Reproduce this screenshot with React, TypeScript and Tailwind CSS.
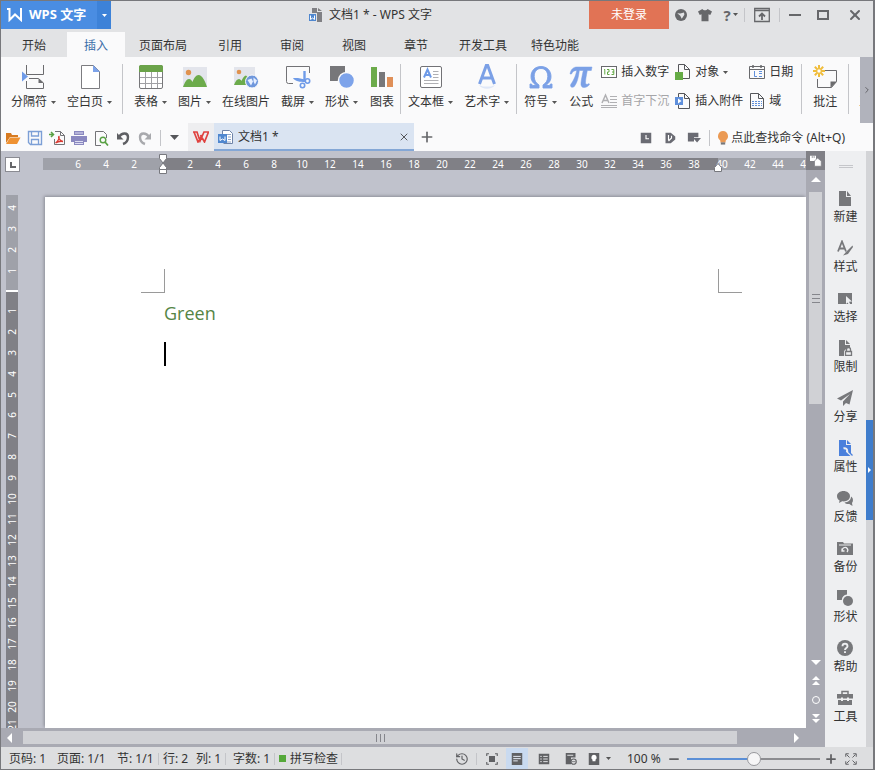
import React from "react";
import clsx from "clsx";
import { ChevronRight, History, Plus, Minus, X } from "lucide-react";

type IconProps = { className?: string };

const TABS = ["开始", "插入", "页面布局", "引用", "审阅", "视图", "章节", "开发工具", "特色功能"];

const H_TICKS = [
  "6", "4", "2", "", "2", "4", "6", "8", "10", "12", "14", "16", "18", "20", "22",
  "24", "26", "28", "30", "32", "34", "36", "38", "40", "42", "44", "46"
];
const V_TOP = ["4", "3", "2", "1"];
const V_BODY = Array.from({ length: 20 }, (_, i) => String(i + 1));

/* ---------- shared bits ---------- */

function Caret({ className = "text-[#555]" }: IconProps) {
  return (
    <svg viewBox="0 0 5 3" className={clsx("w-[5px] h-[3px] shrink-0", className)} fill="currentColor">
      <path d="M0 0h5L2.5 3z" />
    </svg>
  );
}

function Triangle({ dir }: { dir: "up" | "down" | "left" | "right" }) {
  const paths = {
    up: "M1 8l5-5 5 5z",
    down: "M1 4l5 5 5-5z",
    left: "M9 1v10L4 6z",
    right: "M3 1v10l5-5z"
  };
  return (
    <svg viewBox="0 0 12 12" className="w-3 h-3" fill="#fff">
      <path d={paths[dir]} />
    </svg>
  );
}

function Separator({ className = "h-4" }: IconProps) {
  return <div className={clsx("w-px bg-[#c4c5c9] shrink-0", className)} />;
}

/* ---------- ribbon icons, 26px box ---------- */

function Glyph({ children }: { children: React.ReactNode }) {
  return (
    <svg viewBox="0 0 26 26" className="w-[26px] h-[26px]" fill="none">
      {children}
    </svg>
  );
}

const BreakIcon = () => (
  <Glyph>
    <path d="M5.500 1v9.500h17V1M5.500 17v7.500h17v-5.500l-5-4.500H8" stroke="#6b6b6e" />
    <path d="M17.500 14.500v4.500h5z" fill="#6b6b6e" />
    <path d="M1 7.500l6 5-6 5z" fill="#6f9be8" />
  </Glyph>
);

const BlankPageIcon = () => (
  <Glyph>
    <path d="M4.500 1.500h12l6 6v17h-18z" stroke="#7c7c80" fill="#fff" />
    <path d="M16 1v7h7z" fill="#7da3ea" />
  </Glyph>
);

const TableIcon = () => (
  <Glyph>
    <rect x="1.500" y="1.500" width="23" height="23" rx="1.500" fill="#fff" stroke="#77777a" />
    <path d="M1 3a2 2 0 0 1 2-2h20a2 2 0 0 1 2 2v5H1z" fill="#6ba34a" />
    <path d="M2 13.500h22M2 19.500h22M7.500 8v16M13.500 8v16M19.500 8v16" stroke="#a0a0a4" />
  </Glyph>
);

const PictureIcon = () => (
  <Glyph>
    <rect x="1" y="3" width="24" height="20" fill="#e3e5ec" />
    <circle cx="6.500" cy="8.500" r="2.700" fill="#e0924f" />
    <path d="M1 23c2-5 3.500-8 6-8 1.800 0 2.800 1.500 3.500 3 1.500-4 3.500-7 6-7 4 0 7 7 8.500 12z" fill="#6cab4b" />
  </Glyph>
);

const OnlinePictureIcon = () => (
  <Glyph>
    <rect x="1" y="3" width="21" height="18" fill="#e3e5ec" />
    <circle cx="6" cy="8" r="2.300" fill="#e0924f" />
    <path d="M1 21c1.500-4 3-6 5-6 1.200 0 2 1 2.500 2 1-3 3-5.500 4.500-5.500l3 3-2 6.500z" fill="#6cab4b" />
    <circle cx="19" cy="17.500" r="6.500" fill="#6f97dc" stroke="#fafafb" />
    <path d="M14.500 16l4-1.500 1.500 3-2 4zM20.500 13.500l3.500 3-2 4-1.500-3z" fill="#e8f0ff" />
  </Glyph>
);

const ScreenshotIcon = () => (
  <Glyph>
    <path d="M8 19.500H3.500a2 2 0 0 1-2-2V2.500h23V9" stroke="#727276" />
    <path d="M19.500 7v10" stroke="#6f9be8" strokeWidth="2.400" />
    <path d="M8 14h5l7 1.500V18c-5 0-10-.5-12-4z" fill="#6f9be8" />
    <circle cx="22.500" cy="17" r="2.200" stroke="#6f9be8" strokeWidth="1.600" />
    <circle cx="17.500" cy="21.500" r="2.200" stroke="#6f9be8" strokeWidth="1.600" />
  </Glyph>
);

const ShapesIcon = () => (
  <Glyph>
    <path d="M1 2h15v15H1z" fill="#77777a" />
    <circle cx="17.500" cy="16.500" r="8" fill="#7da3ea" stroke="#fafafb" strokeWidth="1.500" />
  </Glyph>
);

const ChartIcon = () => (
  <Glyph>
    <path d="M2 3h6v20H2z" fill="#6cab4b" />
    <path d="M10 8h6v15h-6z" fill="#77777a" />
    <path d="M18 13h6v10h-6z" fill="#df8f58" />
  </Glyph>
);

const TextBoxIcon = () => (
  <Glyph>
    <rect x="2.500" y="2.500" width="21" height="21" rx="1.500" stroke="#727276" fill="#fff" />
    <path d="M6 13.500l3.500-8 3.500 8M7.500 11h4" stroke="#6f9be8" strokeWidth="2" />
    <path d="M15 7.500h5.500M15 10.500h5.500M15 13.500h5.500M6 16.500h14.500M6 19.500h14.500" stroke="#b0b0b4" />
  </Glyph>
);

const WordArtIcon = () => (
  <Glyph>
    <path d="M5.500 20L12.300 1.500h1.400L20.500 20M8 14h10" stroke="#7ba0e6" strokeWidth="3" />
    <path d="M5 21c3 5 13 5 16 0l-4 1.500H9z" fill="#dfe7f7" />
  </Glyph>
);

const OmegaIcon = () => (
  <Glyph>
    <path
      d="M2 24v-4h1.500l1 1.500h4C4.500 19 3 16 3 12.500 3 6.500 7.200 2.500 13 2.500s10 4 10 10c0 3.500-1.500 6.500-5.500 9h4l1-1.500H24v4h-9v-3c3.300-2 4.800-5 4.800-8.500 0-5-2.600-8-6.800-8s-6.800 3-6.800 8c0 3.500 1.500 6.500 4.800 8.500v3z"
      fill="#7ba0e6"
      stroke="#7ba0e6"
      strokeWidth=".9"
    />
  </Glyph>
);

const PiIcon = () => (
  <Glyph>
    <path
      d="M2 10c1-5 3.500-7 7-7h15l-.7 3.500h-4c-1 5-1.800 9.500-1.800 12 0 2 1.700 2.500 3.500 1l.5 1c-1.500 2-3.500 3-5.500 3-2.500 0-3.300-2-3-4.500.3-3.500 1.300-8 2.300-12.500h-4c-.7 6-2 12.500-5 16-1.300 1.300-3.800 1-3.800-1 0-2 4-4.500 6.300-15-2.300 0-4 .5-5.300 3.500z"
      fill="#7ba0e6"
      stroke="#7ba0e6"
      strokeWidth=".5"
    />
  </Glyph>
);

const CommentIcon = () => (
  <Glyph>
    <path d="M13 6.500h11.500v11l-5 6H5.500V15" stroke="#6b6b6e" />
    <path d="M18.500 24v-6.500H25z" fill="#6b6b6e" />
    <path d="M7 1v12M1 7h12M2.800 2.800l8.400 8.400M11.200 2.800l-8.400 8.400" stroke="#f0bd3c" strokeWidth="2" />
    <circle cx="7" cy="7" r="2.200" fill="#fff" stroke="#f0bd3c" />
  </Glyph>
);

const ToolIcon = () => (
  <Glyph>
    <path d="M4.500 3.500h17v18h-17z" stroke="#fafafb" />
  </Glyph>
);

/* ---------- small ribbon icons, 16px box ---------- */

function Small({ children, className = "w-4 h-4" }: { children: React.ReactNode; className?: string }) {
  return (
    <svg viewBox="0 0 16 16" className={clsx("shrink-0", className)} fill="none">
      {children}
    </svg>
  );
}

const NumberIcon = () => (
  <Small>
    <rect x=".5" y="2.500" width="15" height="11" stroke="#68696c" fill="#fff" />
    <path d="M3 5.500h.8v5M6 5.500h2v2.500H6.500v2.500h2M10.500 5.500h2.300v5h-2.300M11 8h2" stroke="#62a844" />
  </Small>
);

const DropCapIcon = () => (
  <Small>
    <path d="M1 10L4.500 2 8 10M2 7.500h5" stroke="#b0b0b3" strokeWidth="1.500" />
    <path d="M9 3.500h7M9 6.500h7M9 9.500h7M0 12.500h16M0 14.500h16" stroke="#b0b0b3" />
  </Small>
);

const ObjectIcon = () => (
  <Small>
    <path d="M3.500 8V.5h6l5 5v9H8" stroke="#55565a" />
    <path d="M9.500.5v5h5" stroke="#55565a" />
    <path d="M0 8h8v8H0z" fill="#65ab45" />
  </Small>
);

const AttachIcon = () => (
  <Small>
    <path d="M3.500 4V.5h6l5 5v10h-11V12" stroke="#55565a" />
    <path d="M9.500.5v5h5" stroke="#55565a" />
    <rect x="0" y="4" width="8" height="8" fill="#5f8fdb" />
    <path d="M3 5.500l3.500 2.500L3 10.500z" fill="#fff" />
  </Small>
);

const DateIcon = () => (
  <Small>
    <path d="M.5 2.500h15v12H.5zM.5 5.500h15" stroke="#68696c" />
    <path d="M4 1v3M12 1v3" stroke="#68696c" strokeWidth="1.500" />
    <path d="M5.500 7v5.500H8M10 7.500h3M10 9.500h3M10 12.500h3" stroke="#5f8fdb" />
  </Small>
);

const FieldIcon = () => (
  <Small>
    <path d="M1.500.5h8l5 5v10h-13zM9.500.5v5h5" stroke="#55565a" />
    <path d="M3 8.500h10M3 10.500h10M3 12.500h10" stroke="#5f8fdb" strokeDasharray="2 1" />
  </Small>
);

/* ---------- quick access icons ---------- */

const QUICK_ICONS: { label: string; icon: React.ReactNode }[] = [
  {
    label: "打开",
    icon: (
      <Small>
        <path d="M1 13V3h5l1 2h6v2H5z" fill="#d77a20" />
        <path d="M1 14l4-6.500h10.500L12 14z" fill="#ef9232" />
      </Small>
    )
  },
  {
    label: "保存",
    icon: (
      <Small>
        <path d="M1.500 1.500h13v13h-11l-2-2z" stroke="#7c9fd6" strokeWidth="1.400" />
        <path d="M4.500 2v4h7V2M4.500 14V9.500h7V14" stroke="#7c9fd6" strokeWidth="1.300" />
      </Small>
    )
  },
  {
    label: "输出为PDF",
    icon: (
      <Small>
        <path d="M6 1.500h5.500l4 4v9h-10V9M11.500 1.500v4h4" stroke="#737377" />
        <path d="M6.500 13c3-2 4-5 3.500-6.500-1 0 0 4.500 4 5-2-.5-5 0-7.500 1.500z" stroke="#d93a32" strokeWidth="1.300" />
        <path d="M0 4.500h4M2 2l2.500 2.500L2 7" stroke="#58a043" strokeWidth="1.500" />
      </Small>
    )
  },
  {
    label: "打印",
    icon: (
      <Small>
        <path d="M3 1h10v4H3zM0 6h16v6H0zM3 10h10v5H3z" fill="#8a88c0" />
        <path d="M4 3h8M4 11.500h8M4 13.500h8" stroke="#dcdcf0" />
      </Small>
    )
  },
  {
    label: "打印预览",
    icon: (
      <Small>
        <path d="M8 15.500H2.500V1.500h8l3 3V8" stroke="#737377" />
        <circle cx="10" cy="10" r="2.800" stroke="#58a043" strokeWidth="1.400" />
        <path d="M12 12l3 3.500" stroke="#58a043" strokeWidth="1.700" />
      </Small>
    )
  },
  {
    label: "撤销",
    icon: (
      <Small>
        <path d="M4 7c3-5 9-4.500 9 0 0 3.500-2 6-5 7" stroke="#5e5f63" strokeWidth="2.400" />
        <path d="M2 3v6.500h6.500z" fill="#5e5f63" />
      </Small>
    )
  },
  {
    label: "恢复",
    icon: (
      <Small>
        <path d="M12 7C9 2 3 2.500 3 7c0 3.500 2 6 5 7" stroke="#a8a9ad" strokeWidth="2.400" />
        <path d="M14 3v6.500H7.500z" fill="#a8a9ad" />
      </Small>
    )
  }
];

/* ---------- sidebar ---------- */

const SIDE_ITEMS: { label: string; active?: boolean; icon: React.ReactNode }[] = [
  { label: "新建", icon: <path d="M2 1h7v6h5v9H2zM10 1l4 5h-4z" fill="currentColor" /> },
  {
    label: "样式",
    icon: (
      <>
        <path d="M1 11.500L5 1.500l4 10M2.500 8.500h5" stroke="currentColor" strokeWidth="1.800" />
        <path d="M15.500 5.500L9 12l-3 3.500 5-1.500 5-7z" fill="currentColor" />
      </>
    )
  },
  {
    label: "选择",
    icon: (
      <>
        <path d="M1 3h14v11H1z" fill="currentColor" />
        <path d="M9 6l6 5.500-3 .3 1.500 3-1.500.7-1.300-3L9 14z" fill="#eeeff1" />
      </>
    )
  },
  {
    label: "限制",
    icon: (
      <>
        <path d="M2 0h6v5h5v3h-3l-3 3v5H2zM9 0l4 4H9z" fill="currentColor" />
        <path d="M8.500 11.500h6v4h-6zM9.500 11V9.500a2 2 0 0 1 4 0V11" stroke="currentColor" strokeWidth="1.300" />
      </>
    )
  },
  { label: "分享", icon: <path d="M16 0L0 8.500l4 2L13 4 6 11.500V16l3-3 3.500 1.500z" fill="currentColor" /> },
  {
    label: "属性",
    active: true,
    icon: (
      <>
        <path d="M2 0h7v5h5v11H2zM10 0l4 4h-4z" fill="currentColor" />
        <path d="M6.500 8.500a2.500 2.500 0 0 1 3.500 3l5 4.500" stroke="#eeeff1" strokeWidth="2" />
        <path d="M11.500 11.500l4 4" stroke="currentColor" strokeWidth="1.300" />
      </>
    )
  },
  {
    label: "反馈",
    icon: (
      <>
        <path d="M6.500 1C3 1 0 3.200 0 6.200c0 1.800 1 3.300 2.600 4.200L2 13l3.200-1.700C9.500 12 13 9.500 13 6.200 13 3.200 10 1 6.500 1z" fill="currentColor" />
        <path d="M14 6.500c0 3.500-3 5.800-6.500 6 1 1.300 3 1.800 4.800 1.500L15.500 16l-.5-3c1.500-2 1.300-5-1-6.500z" fill="currentColor" />
      </>
    )
  },
  {
    label: "备份",
    icon: (
      <>
        <path d="M0 2h6l1 1.500h9V15H0z" fill="currentColor" />
        <path d="M2 5h12" stroke="#eeeff1" />
        <path d="M5.500 11a2.700 2.700 0 1 1 4.500 1M5 8.500V11h2.500" stroke="#eeeff1" strokeWidth="1.300" />
      </>
    )
  },
  {
    label: "形状",
    icon: (
      <>
        <path d="M0 0h10v4.500A6 6 0 0 0 4.800 10H0z" fill="currentColor" />
        <circle cx="11" cy="11" r="5" fill="currentColor" />
      </>
    )
  },
  {
    label: "帮助",
    icon: (
      <>
        <circle cx="8" cy="8" r="8" fill="currentColor" />
        <path d="M5.500 6.200c0-3.200 5-3.200 5 0 0 1.800-2.500 1.800-2.500 3.800M8 11.200v1.800" stroke="#eeeff1" strokeWidth="1.900" />
      </>
    )
  },
  {
    label: "工具",
    icon: (
      <>
        <path d="M5 4V1.500h6V4" stroke="currentColor" strokeWidth="1.500" />
        <path d="M0 4h16v4.500h-4V7.500h-2v1H6v-1H4v1H0zM1 10h3v1h2v-1h4v1h2v-1h3v5H1z" fill="currentColor" />
      </>
    )
  }
];

/* ---------- ribbon ---------- */

interface BigButtonProps {
  icon: React.ReactNode;
  label: string;
  menu?: boolean;
}

function BigButton({ icon, label, menu }: BigButtonProps) {
  return (
    <button className="flex flex-col items-center gap-1 px-[5px] shrink-0 hover:bg-[#e6ecf6]">
      {icon}
      <span className="flex items-center gap-1 leading-4 whitespace-nowrap">
        {label}
        {menu && <Caret />}
      </span>
    </button>
  );
}

function SmallButton({ icon, label, menu, disabled }: BigButtonProps & { disabled?: boolean }) {
  return (
    <button
      disabled={disabled}
      className="flex items-center gap-1 h-4 leading-4 whitespace-nowrap disabled:text-[#a5a5a8]"
    >
      {icon}
      {label}
      {menu && <Caret />}
    </button>
  );
}

function Ribbon() {
  return (
    <div className="flex h-[66px] bg-[#fafafb] shrink-0">
      <div className="flex flex-1 min-w-0 overflow-hidden items-start pt-[7px]">
        <div className="flex gap-px px-[5px]">
          <BigButton icon={<BreakIcon />} label="分隔符" menu />
          <BigButton icon={<BlankPageIcon />} label="空白页" menu />
        </div>
        <Separator className="h-[50px]" />
        <div className="flex gap-px pl-1.5">
          <BigButton icon={<TableIcon />} label="表格" menu />
          <BigButton icon={<PictureIcon />} label="图片" menu />
          <BigButton icon={<OnlinePictureIcon />} label="在线图片" />
          <BigButton icon={<ScreenshotIcon />} label="截屏" menu />
          <BigButton icon={<ShapesIcon />} label="形状" menu />
          <BigButton icon={<ChartIcon />} label="图表" />
        </div>
        <Separator className="h-[50px]" />
        <div className="flex gap-px px-0.5">
          <BigButton icon={<TextBoxIcon />} label="文本框" menu />
          <BigButton icon={<WordArtIcon />} label="艺术字" menu />
        </div>
        <Separator className="h-[50px]" />
        <div className="flex gap-px px-0.5">
          <BigButton icon={<OmegaIcon />} label="符号" menu />
          <BigButton icon={<PiIcon />} label="公式" />
        </div>
        <div className="grid grid-cols-[auto_auto_auto] gap-x-1.5 gap-y-[13px] justify-items-start pr-2 shrink-0">
          <SmallButton icon={<NumberIcon />} label="插入数字" />
          <SmallButton icon={<ObjectIcon />} label="对象" menu />
          <SmallButton icon={<DateIcon />} label="日期" />
          <SmallButton icon={<DropCapIcon />} label="首字下沉" disabled />
          <SmallButton icon={<AttachIcon />} label="插入附件" />
          <SmallButton icon={<FieldIcon />} label="域" />
        </div>
        <Separator className="h-[50px]" />
        <div className="px-[5px]">
          <BigButton icon={<CommentIcon />} label="批注" />
        </div>
        <Separator className="h-[50px]" />
        <div className="pl-1">
          <BigButton icon={<ToolIcon />} label="工具" />
        </div>
      </div>
      <button aria-label="更多" className="w-[13px] bg-[#b1b3bc] flex items-center justify-center text-[#55565a]">
        <ChevronRight className="w-2.5 h-2.5" />
      </button>
    </div>
  );
}

function TitleBar() {
  return (
    <header className="flex h-[28px] shrink-0">
      <button className="w-[110px] bg-[#4a8de2] text-white flex items-center pl-1.5">
        <svg viewBox="0 0 16 14" className="w-4 h-3.5" fill="none" stroke="#fff" strokeWidth="2">
          <path d="M0 1h2.500v11L8 6.500l6 5.500V0" />
        </svg>
        <span className="pl-1.5 text-[13px] font-bold flex-1 text-left whitespace-nowrap">WPS 文字</span>
        <span className="h-full w-[14px] flex items-center justify-center bg-[#3d82d8]">
          <Caret className="text-white" />
        </span>
      </button>
      <div className="flex-1 flex items-center justify-center gap-[7px] pl-10">
        <svg viewBox="0 0 14 14" className="w-3.5 h-3.5" fill="none">
          <path d="M4 0h5v4h5v10H4zM10 0l4 3h-4z" fill="#808084" />
          <rect x=".5" y="5.500" width="8" height="8" fill="#4f87cf" stroke="#e2e3e5" />
          <path d="M2.500 7.500v4l2-1.500 2 1.500v-4" stroke="#fff" />
        </svg>
        <h1 className="whitespace-nowrap">文档1 * - WPS 文字</h1>
      </div>
      <button className="w-20 bg-[#e17355] text-white">未登录</button>
      <div className="flex items-center text-[#66676a]">
        <button aria-label="服务" className="w-6 flex justify-center">
          <Small className="w-3 h-3">
            <circle cx="8" cy="8" r="8" fill="currentColor" />
            <path d="M3 5.500l4 .5 5-1.500.5 3L9 13 7 9z" fill="#e2e3e5" />
          </Small>
        </button>
        <button aria-label="皮肤" className="w-6 flex justify-center">
          <Small className="w-3.5 h-3.5">
            <path d="M5 1c1 2 5 2 6 0l5 3-2 4-2-1v8H4V7L2 8 0 4z" fill="currentColor" />
          </Small>
        </button>
        <button aria-label="帮助" className="w-[27px] flex items-center justify-center gap-0.5 text-[15px] font-bold">
          ?<Caret />
        </button>
        <Separator className="h-3.5" />
        <button aria-label="功能区" className="w-[34px] flex justify-center">
          <Small>
            <path d="M.7 1.500h14.600v13H.7zM1 3.500h14" stroke="currentColor" strokeWidth="1.300" />
            <path d="M8 13V7M5 9.500L8 6.500l3 3" stroke="currentColor" strokeWidth="1.800" />
          </Small>
        </button>
        <Separator className="h-3.5" />
        <button aria-label="最小化" className="w-[30px] flex justify-center">
          <span className="w-3 h-0.5 bg-[#66676a]" />
        </button>
        <button aria-label="最大化" className="w-[26px] flex justify-center">
          <span className="w-3 h-2.5 border-2 border-[#66676a]" />
        </button>
        <button aria-label="关闭" className="w-[37px] flex justify-center">
          <X className="w-4 h-4" strokeWidth={3} />
        </button>
      </div>
    </header>
  );
}

function QuickBar() {
  return (
    <div className="flex h-7 items-stretch bg-[#fafafb] shrink-0 pl-px">
      <div className="flex items-center pt-px">
        {QUICK_ICONS.map((q) => (
          <button key={q.label} aria-label={q.label} className="w-[22px] flex justify-center">
            {q.icon}
          </button>
        ))}
        <Separator className="h-4 ml-1" />
        <button aria-label="自定义" className="w-[27px] flex justify-center">
          <svg viewBox="0 0 9 5" className="w-[9px] h-[5px]" fill="#55565a">
            <path d="M0 0h9L4.500 5z" />
          </svg>
        </button>
      </div>
      <button aria-label="WPS" className="w-[26px] bg-[#eeeef0] flex items-center justify-center">
        <svg viewBox="0 0 16 12" className="w-4 h-3" fill="none" stroke="#e0423f" strokeWidth="1.700">
          <path d="M0 1h4l3 9 4-9h4.500l-4 10-4-7M1 1l4 10 3-5" />
        </svg>
      </button>
      <div className="w-[200px] bg-[#dae4f2] border-b-2 border-[#84a7d6] flex items-center pt-0.5 pl-1 pr-1 gap-1">
        <Small>
          <path d="M4.500 5V1.500h7l3 3v10h-9" stroke="#6f84a8" fill="#fff" />
          <path d="M9 5.500h4M10 8h3M10 10.500h3M7 13h6" stroke="#8da4c8" />
          <rect x="0" y="5" width="9" height="9" fill="#4f87cf" />
          <path d="M2 7.500v4l2.500-1.500L7 11.500v-4" stroke="#fff" />
        </Small>
        <span className="flex-1 whitespace-nowrap">文档1 *</span>
        <button aria-label="关闭文档" className="text-[#55565a]">
          <X className="w-3 h-3" />
        </button>
      </div>
      <button aria-label="新建标签" className="w-[26px] flex items-center justify-center text-[#66676a]">
        <Plus className="w-4 h-4" strokeWidth={2.5} />
      </button>
      <div className="flex-1 flex items-center justify-end text-[#6a6b73] pt-px pr-7">
        <button aria-label="最近" className="w-6 flex justify-center">
          <Small className="w-3 h-3">
            <path d="M1 1h14v14H1z" fill="currentColor" />
            <path d="M8 4v5h4" stroke="#fff" strokeWidth="1.500" />
          </Small>
        </button>
        <button aria-label="文档漫游" className="w-6 flex justify-center">
          <Small className="w-3 h-3">
            <path d="M2 1h7l6 5v4l-6 5H2z" fill="currentColor" />
            <path d="M6 4v7M6 12l4-4V5" stroke="#fff" strokeWidth="1.500" />
          </Small>
        </button>
        <button aria-label="切换" className="w-6 flex justify-center">
          <Small className="w-3.5 h-3.5">
            <path d="M1 2h12v5H8v5H1zM7 8h9l-4.500 5z" fill="currentColor" />
          </Small>
        </button>
        <Separator className="h-4 ml-[3px] mr-1.5" />
        <button className="flex items-center gap-px text-[#333] whitespace-nowrap">
          <Small className="w-3.5 h-4">
            <path d="M8 0a6 6 0 0 0-3 11v2h6v-2A6 6 0 0 0 8 0z" fill="#eb9a54" />
            <path d="M5.500 13h5v2.500h-5z" fill="#77777a" />
          </Small>
          点此查找命令 (Alt+Q)
        </button>
      </div>
    </div>
  );
}

function HorizontalRuler() {
  return (
    <div className="h-[44px] flex items-start pt-1.5 pl-1 shrink-0">
      <button
        aria-label="制表符"
        className="w-[15px] h-[15px] bg-white border border-[#8a8b92] flex items-center justify-center shrink-0"
      >
        <span className="w-1.5 h-1.5 border-l-2 border-b-2 border-[#66676a]" />
      </button>
      <div className="relative ml-[23px] flex-1 min-w-0">
        <div className="mt-px flex h-3 overflow-hidden pl-[21px] bg-[linear-gradient(to_right,#9fa1a9_120px,#808086_120px,#808086_675px,#9fa1a9_675px)]">
          {H_TICKS.map((t, i) => (
            <span key={i} className="w-7 shrink-0 text-center text-[10px] leading-3 text-white">
              {t}
            </span>
          ))}
        </div>
        <svg viewBox="0 0 10 22" className="absolute left-[115px] -top-1 w-2.5 h-[22px]" fill="#fff" stroke="#77787e">
          <path d="M1.500 1.500h7v4L5 10l3.500 4.500v2h-7v-2L5 10 1.500 5.500zM1.500 16.500h7v4h-7z" />
        </svg>
        <svg viewBox="0 0 10 12" className="absolute left-[670px] top-1 w-2.5 h-3" fill="#fff" stroke="#77787e">
          <path d="M1.500 10.500v-4L5 2.500l3.500 4v4z" />
        </svg>
      </div>
    </div>
  );
}

function VerticalRuler() {
  const cell = "flex-1 flex items-center justify-center";
  return (
    <div className="w-3 shrink-0 flex flex-col overflow-hidden text-[10px] leading-3 text-white bg-[#808086]">
      <div className="h-[95px] shrink-0 flex flex-col bg-[#9fa1a9] pt-0.5 pb-[9px]">
        {V_TOP.map((t) => (
          <span key={t} className={cell}>
            <span className="-rotate-90">{t}</span>
          </span>
        ))}
      </div>
      <div className="h-0.5 bg-white shrink-0" />
      <div className="h-[416px] shrink-0 flex flex-col mt-[9px]">
        {V_BODY.map((t) => (
          <span key={t} className={cell}>
            <span className="-rotate-90">{t}</span>
          </span>
        ))}
      </div>
      <span className="-rotate-90 text-center mt-0.5">21</span>
    </div>
  );
}

function Page() {
  return (
    <main className="flex-1 min-w-0 ml-[27px] mt-0.5 bg-white shadow-[-1px_-1px_3px_#8b8d96]">
      <div className="h-24 flex justify-between items-end pl-24 pr-16">
        <div className="w-6 h-6 border-r border-b border-[#9a9a9a]" />
        <div className="w-6 h-6 border-l border-b border-[#9a9a9a]" />
      </div>
      <div className="pl-[119px] pt-2">
        <p className="text-[18px] leading-6 text-[#558545] font-['Open_Sans','Noto_Sans',sans-serif]">Green</p>
        <div className="mt-[17px] w-0.5 h-6 bg-black" />
      </div>
    </main>
  );
}

function VerticalScroll() {
  const btn = "h-[19px] w-full flex items-center justify-center";
  return (
    <div className="w-[19px] bg-[#a9aab3] flex flex-col items-center shrink-0">
      <button aria-label="标尺" className="w-full h-[19px] bg-[#808086] flex items-center justify-center">
        <Small className="w-3 h-3">
          <path d="M0 1h8v7H0z" fill="#fff" />
          <path d="M3 1v3M5.500 1v3" stroke="#808086" />
          <path d="M10 4l5 4v7H6V8z" fill="#fff" stroke="#808086" />
        </Small>
      </button>
      <button aria-label="向上" className={btn}>
        <Triangle dir="up" />
      </button>
      <div className="mt-[3px] w-[13px] h-[212px] bg-[#d0d1d5] flex flex-col items-center justify-center gap-[3px]">
        <span className="w-2 h-px bg-[#85868c]" />
        <span className="w-2 h-px bg-[#85868c]" />
        <span className="w-2 h-px bg-[#85868c]" />
      </div>
      <div className="flex-1" />
      <button aria-label="向下" className={btn}>
        <Triangle dir="down" />
      </button>
      <button aria-label="上一页" className={btn}>
        <svg viewBox="0 0 8 9" className="w-2 h-[9px]" fill="#fff">
          <path d="M0 4l4-4 4 4zM0 9l4-4 4 4z" />
        </svg>
      </button>
      <button aria-label="浏览对象" className={btn}>
        <span className="w-2 h-2 rounded-full border border-white" />
      </button>
      <button aria-label="下一页" className={btn}>
        <svg viewBox="0 0 8 9" className="w-2 h-[9px]" fill="#fff">
          <path d="M0 0l4 4 4-4zM0 5l4 4 4-4z" />
        </svg>
      </button>
    </div>
  );
}

function HorizontalScroll() {
  return (
    <div className="h-[19px] bg-[#a9aab3] flex items-center shrink-0">
      <button aria-label="向左" className="w-[22px] flex justify-center pr-1.5">
        <Triangle dir="left" />
      </button>
      <div className="flex-1 h-[13px] mr-[50px] bg-[#d0d1d5] flex items-center justify-center gap-[3px]">
        <span className="w-px h-2 bg-[#85868c]" />
        <span className="w-px h-2 bg-[#85868c]" />
        <span className="w-px h-2 bg-[#85868c]" />
      </div>
      <button aria-label="向右" className="w-[38px] flex pl-1">
        <Triangle dir="right" />
      </button>
    </div>
  );
}

function Sidebar() {
  return (
    <aside className="flex shrink-0 bg-[#d3d4d7]">
      <nav className="w-[41px] bg-[#eeeff1] flex flex-col items-center pt-3.5 overflow-hidden">
        <div className="w-3.5 h-[3px] border-y border-[#c5c6ca] mb-5 shrink-0" />
        {SIDE_ITEMS.map((s) => (
          <button key={s.label} className="h-[50px] shrink-0 flex flex-col items-center gap-[3px] pt-0.5">
            <svg
              viewBox="0 0 16 16"
              className={clsx("w-4 h-4", s.active ? "text-[#4a80dc]" : "text-[#77787b]")}
              fill="none"
            >
              {s.icon}
            </svg>
            <span className="leading-4">{s.label}</span>
          </button>
        ))}
      </nav>
      <div className="w-[7px] pt-[269px]">
        <button aria-label="展开" className="w-full h-[100px] bg-[#3f7dcc] flex items-center justify-center">
          <svg viewBox="0 0 3 6" className="w-[3px] h-1.5" fill="#fff">
            <path d="M0 0l3 3-3 3z" />
          </svg>
        </button>
      </div>
    </aside>
  );
}

function StatusBar() {
  return (
    <footer className="h-[22px] shrink-0 bg-[#dddee0] flex items-center justify-between pt-px pl-2 pr-4 whitespace-nowrap">
      <div className="flex items-center">
        <span className="w-12">页码: 1</span>
        <span className="w-[60px]">页面: 1/1</span>
        <span className="w-[41px]">节: 1/1</span>
        <Separator className="h-3" />
        <span className="w-[33px] ml-1">行: 2</span>
        <span className="w-[29px]">列: 1</span>
        <Separator className="h-3" />
        <span className="w-[41px] ml-[7px]">字数: 1</span>
        <Separator className="h-3" />
        <span className="w-[7px] h-[7px] bg-[#55a83a] mx-1" />
        <span className="mr-[3px]">拼写检查</span>
        <Separator className="h-3" />
      </div>
      <div className="flex items-center h-full text-[#606164]">
        <button aria-label="历史" className="w-[29px] flex justify-center">
          <History className="w-3.5 h-3.5" />
        </button>
        <Separator className="h-3" />
        <button aria-label="全屏" className="w-[29px] flex justify-center">
          <Small className="w-3 h-3">
            <path d="M4 4h8v8H4z" fill="currentColor" />
            <path d="M1 4V1h3M12 1h3v3M15 12v3h-3M4 15H1v-3" stroke="currentColor" strokeWidth="1.500" />
          </Small>
        </button>
        <button aria-label="页面视图" className="w-[22px] h-full bg-[#c9daf0] flex items-center justify-center">
          <Small className="w-3 h-3">
            <path d="M1 0h14v16H1z" fill="currentColor" />
            <path d="M3 4.500h10M3 7.500h10M3 10.500h6" stroke="#e8eef8" strokeWidth="1.300" />
          </Small>
        </button>
        <button aria-label="大纲" className="w-[27px] ml-0.5 flex justify-center">
          <Small className="w-3 h-3">
            <path d="M1 1h14v14H1z" fill="currentColor" />
            <path d="M3 4.500h2M3 8h2M3 11.500h2M7 4.500h6M7 8h6M7 11.500h6" stroke="#e4e5e7" strokeWidth="1.300" />
          </Small>
        </button>
        <button aria-label="Web版式" className="w-[27px] flex justify-center">
          <Small className="w-3 h-3">
            <path d="M1 0h13v6H8v9H1z" fill="currentColor" />
            <path d="M3 3h8" stroke="#e4e5e7" strokeWidth="1.300" />
            <circle cx="11.500" cy="11.500" r="3.500" stroke="currentColor" strokeWidth="1.500" />
            <path d="M9 11.500h5" stroke="currentColor" />
          </Small>
        </button>
        <button aria-label="护眼模式" className="w-[27px] flex items-center justify-end gap-1.5 mr-4">
          <Small className="w-3 h-3">
            <path d="M1 0h14v16H1z" fill="currentColor" />
            <path d="M8 2.500a3.500 3.500 0 0 0-2 6.400V11h4V8.900a3.500 3.500 0 0 0-2-6.400zM6 12.500h4" fill="#fff" />
          </Small>
          <Caret />
        </button>
        <span className="w-[38px] text-[#333]">100 %</span>
        <button aria-label="缩小" className="w-[18px] flex justify-center">
          <Minus className="w-3.5 h-3.5" strokeWidth={3} />
        </button>
        <input
          type="range"
          aria-label="显示比例"
          defaultValue={50}
          className="w-[133px] h-3.5 mx-1 appearance-none bg-[linear-gradient(to_right,#5b8fd6_50%,#8b8c90_50%)] bg-[length:100%_2px] bg-center bg-no-repeat [&::-webkit-slider-thumb]:appearance-none [&::-webkit-slider-thumb]:w-3.5 [&::-webkit-slider-thumb]:h-3.5 [&::-webkit-slider-thumb]:rounded-full [&::-webkit-slider-thumb]:bg-[#f6f6f7] [&::-webkit-slider-thumb]:border [&::-webkit-slider-thumb]:border-[#97989c]"
        />
        <button aria-label="放大" className="w-3.5 flex justify-center">
          <Plus className="w-3.5 h-3.5" strokeWidth={3} />
        </button>
        <button aria-label="适应窗口" className="ml-[7px]">
          <Small className="w-3 h-3">
            <path d="M1 5V1h4M11 1h4v4M15 11v4h-4M5 15H1v-4M2 2l4 4M14 2l-4 4M14 14l-4-4M2 14l4-4" stroke="currentColor" strokeWidth="1.300" />
          </Small>
        </button>
      </div>
    </footer>
  );
}

export default function App() {
  return (
    <div className="h-screen flex flex-col overflow-hidden bg-[#e2e3e5] border-t border-l border-r-2 border-b border-[#77787c] text-xs text-[#333] font-['Noto_Sans','Noto_Sans_CJK_SC',sans-serif]">
      <TitleBar />

      {/* Ribbon tabs */}
      <div role="tablist" className="flex items-end h-7 pl-0.5 shrink-0">
        {TABS.map((tab) => {
          const active = tab === "插入";
          return (
            <button
              key={tab}
              role="tab"
              aria-selected={active}
              className={clsx(
                "h-[25px] pt-0.5 whitespace-nowrap",
                tab.length > 2 ? "w-[72px]" : active ? "w-[58px] mx-0.5 bg-[#fafafb] text-[#3a6ea8]" : "w-[62px]"
              )}
            >
              {tab}
            </button>
          );
        })}
      </div>

      <Ribbon />
      <QuickBar />

      {/* Work area */}
      <div className="flex flex-1 min-h-0">
        <div className="flex-1 min-w-0 flex flex-col">
          <div className="flex flex-1 min-h-0">
            <div className="flex-1 min-w-0 flex flex-col overflow-hidden bg-[#c0c2cc]">
              <HorizontalRuler />
              <div className="flex flex-1 min-h-0 pl-[5px]">
                <VerticalRuler />
                <Page />
              </div>
            </div>
            <VerticalScroll />
          </div>
          <HorizontalScroll />
        </div>
        <Sidebar />
      </div>

      <StatusBar />
    </div>
  );
}
